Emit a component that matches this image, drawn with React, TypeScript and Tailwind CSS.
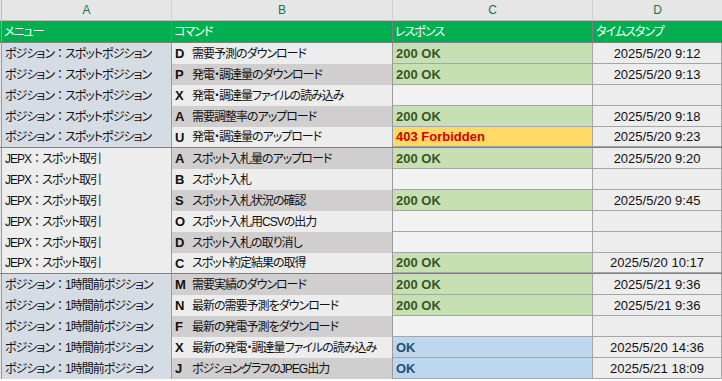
import React from 'react'

type Status = 'ok200' | 'forbidden' | 'ok' | null

interface Row {
  menu: string
  key: string
  command: string
  status: Status
  time: string
}

const rows: Row[] = [
  { menu: 'ポジション：スポットポジション', key: 'D', command: '需要予測のダウンロード', status: 'ok200', time: '2025/5/20 9:12' },
  { menu: 'ポジション：スポットポジション', key: 'P', command: '発電・調達量のダウンロード', status: 'ok200', time: '2025/5/20 9:13' },
  { menu: 'ポジション：スポットポジション', key: 'X', command: '発電・調達量ファイルの読み込み', status: null, time: '' },
  { menu: 'ポジション：スポットポジション', key: 'A', command: '需要調整率のアップロード', status: 'ok200', time: '2025/5/20 9:18' },
  { menu: 'ポジション：スポットポジション', key: 'U', command: '発電・調達量のアップロード', status: 'forbidden', time: '2025/5/20 9:23' },
  { menu: 'JEPX：スポット取引', key: 'A', command: 'スポット入札量のアップロード', status: 'ok200', time: '2025/5/20 9:20' },
  { menu: 'JEPX：スポット取引', key: 'B', command: 'スポット入札', status: null, time: '' },
  { menu: 'JEPX：スポット取引', key: 'S', command: 'スポット入札状況の確認', status: 'ok200', time: '2025/5/20 9:45' },
  { menu: 'JEPX：スポット取引', key: 'O', command: 'スポット入札用CSVの出力', status: null, time: '' },
  { menu: 'JEPX：スポット取引', key: 'D', command: 'スポット入札の取り消し', status: null, time: '' },
  { menu: 'JEPX：スポット取引', key: 'C', command: 'スポット約定結果の取得', status: 'ok200', time: '2025/5/20 10:17' },
  { menu: 'ポジション：1時間前ポジション', key: 'M', command: '需要実績のダウンロード', status: 'ok200', time: '2025/5/21 9:36' },
  { menu: 'ポジション：1時間前ポジション', key: 'N', command: '最新の需要予測をダウンロード', status: 'ok200', time: '2025/5/21 9:36' },
  { menu: 'ポジション：1時間前ポジション', key: 'F', command: '最新の発電予測をダウンロード', status: null, time: '' },
  { menu: 'ポジション：1時間前ポジション', key: 'X', command: '最新の発電・調達量ファイルの読み込み', status: 'ok', time: '2025/5/20 14:36' },
  { menu: 'ポジション：1時間前ポジション', key: 'J', command: 'ポジショングラフのJPEG出力', status: 'ok', time: '2025/5/21 18:09' },
]

// Japanese runs: narrower, like Meiryo UI
const jp = "text-[12px] tracking-[-1px] [font-feature-settings:'palt']"

function Menu({ text }: { text: string }) {
  const [left, right] = text.split('：')
  return (
    <span className={jp}>
      {left}
      <span className="mx-[3px]">：</span>
      {right}
    </span>
  )
}

function StatusCell({ status }: { status: Status }) {
  if (status === 'ok200')
    return <div className="w-[200px] h-full border-r border-b border-[#a6a6a6] bg-[#c6e0b4] pl-[3px] flex items-center font-bold text-[#375623]">200 OK</div>
  if (status === 'forbidden')
    return <div className="w-[200px] h-full border-r border-b border-[#a6a6a6] bg-[#ffd966] pl-[3px] flex items-center font-bold text-[#d00000]">403 Forbidden</div>
  if (status === 'ok')
    return <div className="w-[200px] h-full border-r border-b border-[#a6a6a6] bg-[#bdd7ee] pl-[3px] flex items-center font-bold text-[#1f4e78]">OK</div>
  return <div className="w-[200px] h-full border-r border-b border-[#a6a6a6] bg-[#f2f2f2]" />
}

export default function App() {
  return (
    <div className="w-[722px] h-[381px] overflow-hidden bg-white text-[13px] text-[#111] font-['Liberation_Sans','Noto_Sans_CJK_JP',sans-serif] leading-none">
      {/* column letters */}
      <div className="flex h-[21px] bg-[#e6e6e6] border-b border-[#bdbdbd] text-[#217346] text-[12px]">
        <div className="w-[2px] border-r border-[#bdbdbd]" />
        <div className="w-[170px] border-r border-[#cfcfcf] flex items-center justify-center">A</div>
        <div className="w-[221px] border-r border-[#cfcfcf] flex items-center justify-center">B</div>
        <div className="w-[200px] border-r border-[#cfcfcf] flex items-center justify-center">C</div>
        <div className="flex-1 flex items-center justify-center">D</div>
      </div>

      {/* header */}
      <div className="flex h-[22px] bg-[#00b050] border-b border-[#7f7f7f] text-white">
        <div className="w-[2px] border-r border-[#9a9a9a]" />
        <div className="w-[170px] border-r border-[#7f7f7f] pl-[2px] flex items-center"><span className={jp}>メニュー</span></div>
        <div className="w-[221px] border-r border-[#7f7f7f] pl-[2px] flex items-center"><span className={jp}>コマンド</span></div>
        <div className="w-[200px] border-r border-[#7f7f7f] pl-[2px] flex items-center"><span className={jp}>レスポンス</span></div>
        <div className="flex-1 pl-[3px] flex items-center"><span className={jp}>タイムスタンプ</span></div>
      </div>

      {rows.map((r, i) => {
        const groupEnd = i === 4 || i === 10
        const blue = i < 5 || i > 10
        const darkB = i % 2 === 1
        return (
          <div key={i} className={`flex h-[21px] ${groupEnd ? 'border-b border-[#808080]' : ''}`}>
            <div className="w-[2px] border-r border-[#9a9a9a] bg-[#e6e6e6]" />
            <div className={`w-[170px] h-full border-r border-[#9a9a9a] pl-[3px] flex items-center whitespace-nowrap ${blue ? 'bg-[#d6dce4]' : 'bg-[#ededed]'}`}>
              <Menu text={r.menu} />
            </div>
            <div className={`w-[221px] h-full border-r border-[#9a9a9a] pl-[3px] flex items-center whitespace-nowrap ${darkB ? 'bg-[#d0cece]' : 'bg-[#ededed]'}`}>
              <span className="font-bold w-[12px] mr-[5px]">{r.key}</span>
              <span className={jp}>{r.command}</span>
            </div>
            <StatusCell status={r.status} />
            <div className="flex-1 h-full border-r border-b border-[#a6a6a6] bg-[#ededed] flex items-center justify-center">
              {r.time}
            </div>
          </div>
        )
      })}
    </div>
  )
}
